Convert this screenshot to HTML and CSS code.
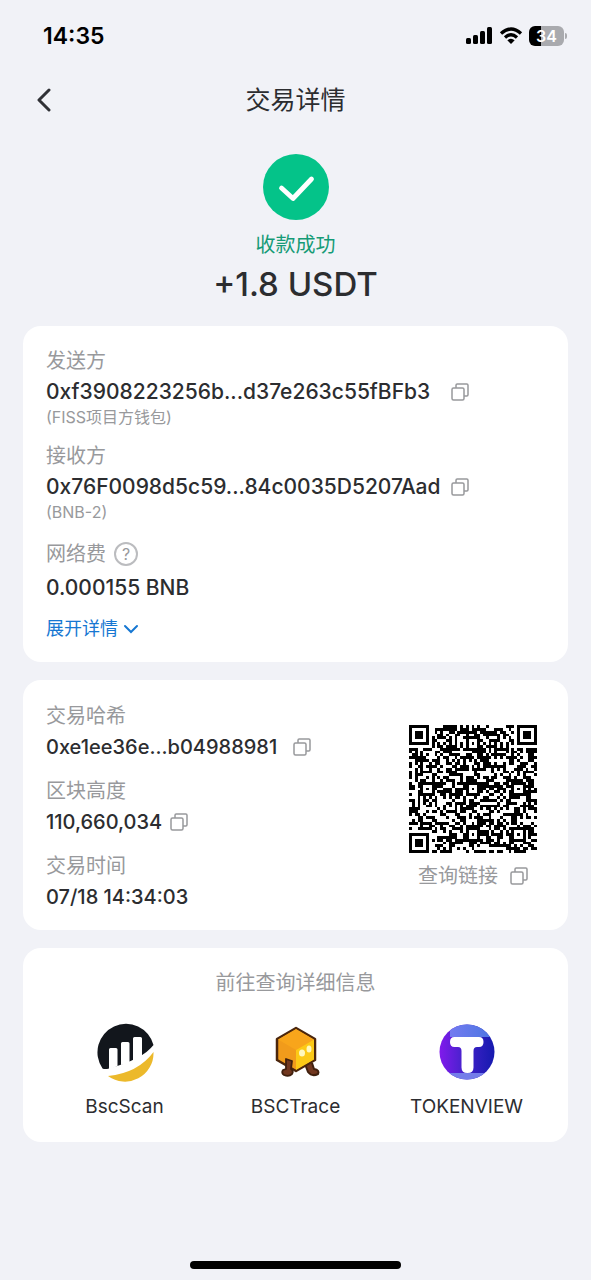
FILE: index.html
```html
<!DOCTYPE html>
<html lang="zh-CN">
<head>
  <meta charset="UTF-8" />
  <meta name="viewport" content="width=device-width, initial-scale=1.0"/>
  <title>交易详情</title>
  <link rel="stylesheet" href="styles.css">
</head>
<body>
  <svg width="0" height="0" class="sprite" aria-hidden="true">
    <symbol id="copy" viewBox="0 0 18 18">
      <rect x="1" y="5" width="12" height="12" rx="1.5"/>
      <path d="M5 5V2.200Q5 1 6.200 1H15.800Q17 1 17 2.200V11.800Q17 13 15.800 13H13"/>
    </symbol>
  </svg>

  <div class="status-bar">
    <span class="time">14:35</span>
    <div class="status-icons">
      <svg width="28" height="18" viewBox="0 0 28 18">
        <rect x="0" y="11" width="5" height="6" rx="1.500"/>
        <rect x="7" y="8" width="5" height="9" rx="1.500"/>
        <rect x="14" y="4" width="5" height="13" rx="1.500"/>
        <rect x="21" y="0" width="5" height="17" rx="1.500"/>
      </svg>
      <svg width="24" height="18" viewBox="0 0 24 18">
        <path d="M2 6.500Q12-2.500 22 6.500M6 10.500Q12 5 18 10.500" fill="none" stroke="#000" stroke-width="3.300"/>
        <path d="M8.300 13.300Q12 10.300 15.700 13.300L12 17Z"/>
      </svg>
      <div class="battery"><span>34</span></div>
    </div>
  </div>

  <header>
    <button class="back" aria-label="返回">
      <svg width="14" height="24" viewBox="0 0 14 24"><path d="M12 2L2 12L12 22"/></svg>
    </button>
    <h1>交易详情</h1>
  </header>

  <section class="result">
    <svg width="66" height="66" viewBox="0 0 66 66">
      <circle cx="33" cy="33" r="33" fill="#04c389"/>
      <path d="M18.500 34L30 44.500L48.500 25" fill="none" stroke="#fff" stroke-width="4.800" stroke-linecap="round" stroke-linejoin="round"/>
    </svg>
    <p class="state">收款成功</p>
    <p class="amount">+1.8 USDT</p>
  </section>

  <main>
    <section class="card transfer">
      <div class="party">
        <h2>发送方</h2>
        <div class="value"><span class="address">0xf3908223256b...d37e263c55fBFb3</span><button class="copy" aria-label="复制发送方"><svg><use href="#copy"/></svg></button></div>
        <p class="note">(FISS项目方钱包)</p>
      </div>
      <div class="party">
        <h2>接收方</h2>
        <div class="value"><span class="address">0x76F0098d5c59...84c0035D5207Aad</span><button class="copy" aria-label="复制接收方"><svg><use href="#copy"/></svg></button></div>
        <p class="note">(BNB-2)</p>
      </div>
      <div class="fee">
        <h2>网络费
          <button class="help" aria-label="网络费说明">?</button>
        </h2>
        <div class="value">0.000155 BNB</div>
      </div>
      <button class="expand">展开详情
        <svg width="16" height="10" viewBox="0 0 16 10"><path d="M2 2L8 8L14 2"/></svg>
      </button>
    </section>

    <section class="card chain">
      <div class="facts">
        <div>
          <h2>交易哈希</h2>
          <div class="value wide">0xe1ee36e...b04988981<button class="copy" aria-label="复制哈希"><svg><use href="#copy"/></svg></button></div>
        </div>
        <div>
          <h2>区块高度</h2>
          <div class="value">110,660,034<button class="copy" aria-label="复制高度"><svg><use href="#copy"/></svg></button></div>
        </div>
        <div>
          <h2>交易时间</h2>
          <div class="value">07/18 14:34:03</div>
        </div>
      </div>
      <div class="qr">
        <svg id="qr" viewBox="0 0 45 45" shape-rendering="crispEdges"></svg>
        <button class="qr-link">查询链接 <svg><use href="#copy"/></svg></button>
      </div>
    </section>

    <section class="card explorers">
      <h2>前往查询详细信息</h2>
      <nav>
        <a href="#bscscan">
          <svg width="60" height="60" viewBox="0 0 60 60">
            <path d="M7.500 46.500A28.500 28.500 0 1 1 58.500 23Q48 37 14 46.500Q10 47.500 7.500 46.500Z" fill="#12161c"/>
            <path d="M14 48V27.500Q14 26 15.500 26H21Q22.500 26 22.500 27.500V44ZM26 43V21.500Q26 20 27.500 20H33Q34.500 20 34.500 21.500V41ZM38 40V16.500Q38 15 39.500 15H45.500Q47 15 47 16.500V37Z" fill="#fff"/>
            <path d="M13 54Q43 51 58.500 30A28.500 28.500 0 0 1 13 54Z" fill="#ecb92b"/>
          </svg>
          BscScan
        </a>
        <a href="#bsctrace">
          <svg width="60" height="60" viewBox="0 0 60 60">
            <path d="M39 42L42 50Q46 55 52 52Q54 48 48 47L46 41" fill="#71371f" stroke="#40200e" stroke-width="2" stroke-linejoin="round"/>
            <path d="M30 6L49 17V38L30 49L11 38V17Z" fill="#f19b1b" stroke="#4b260d" stroke-width="2.500" stroke-linejoin="round"/>
            <path d="M30 7L48 17.500L30 28L12 17.500Z" fill="#f8a51b"/>
            <path d="M30 28L48 17.500V37.500L30 48Z" fill="#fcc916"/>
            <path d="M20 37L26 39L25 47Q28 49 26 52Q23 55 18 53Q15 51 17 48L20 47Z" fill="#71371f" stroke="#40200e" stroke-width="1.800" stroke-linejoin="round"/>
            <ellipse cx="36" cy="31" rx="3" ry="3.500" fill="#fff8bd"/>
            <ellipse cx="43" cy="27" rx="2.500" ry="3.500" fill="#fff8bd"/>
          </svg>
          BSCTrace
        </a>
        <a href="#tokenview">
          <svg width="60" height="60" viewBox="0 0 60 60">
            <defs>
              <linearGradient id="tv"><stop offset="0" stop-color="#8719ef"/><stop offset="0.450" stop-color="#4522cb"/><stop offset="1" stop-color="#1119ac"/></linearGradient>
              <linearGradient id="tv-top"><stop offset="0" stop-color="#737bf0"/><stop offset="1" stop-color="#4775e0"/></linearGradient>
              <clipPath id="round"><circle cx="30" cy="30" r="27.500"/></clipPath>
            </defs>
            <g clip-path="url(#round)">
              <rect width="60" height="60" fill="url(#tv)"/>
              <path d="M13 0H60V15H13Z" fill="url(#tv-top)"/>
              <path d="M12 51H48V60H12Z" fill="#747de9"/>
            </g>
            <path d="M17.500 15H42Q46.500 15 46.500 20T42 25H40Q36.500 25 36.500 29V45.500Q36.500 51 30.500 51T24.500 45.500V29Q24.500 25 21 25H17.500Q13 25 13 20T17.500 15Z" fill="#fff"/>
          </svg>
          TOKENVIEW
        </a>
      </nav>
    </section>
  </main>

  <div class="home-indicator"></div>

  <script>
    const SIZE = 45;
    const marks = [6, 22, 38];

    // rings around a centre: finder (r = 4) or alignment (r = 2)
    function ring(x, y, cx, cy, r) {
      const d = Math.max(Math.abs(x - cx), Math.abs(y - cy));
      if (d > r) return null;
      return r === 4 ? d !== 2 && d !== 4 : d !== 1;
    }

    function fixed(x, y) {
      for (const [cx, cy] of [[3, 3], [41, 3], [3, 41]]) {
        const v = ring(x, y, cx, cy, 4);
        if (v !== null) return v;
      }
      for (const cx of marks) for (const cy of marks) {
        if ((cx === 6 && cy !== 22) || (cy === 6 && cx !== 22)) continue;
        const v = ring(x, y, cx, cy, 2);
        if (v !== null) return v;
      }
      if (x === 6 || y === 6) return (x + y) % 2 === 0;
      return null;
    }

    function drawQr() {
      let seed = 110660034, d = "";
      for (let y = 0; y < SIZE; y++) {
        for (let x = 0; x < SIZE; x++) {
          seed = (Math.imul(seed, 1664525) + 1013904223) >>> 0;
          let on = fixed(x, y);
          if (on === null) on = (seed >>> 16) % 100 < 55;
          if (on) d += `M${x} ${y}h1v1h-1z`;
        }
      }
      document.getElementById("qr").innerHTML = `<path d="${d}"/>`;
    }

    drawQr();
  </script>
</body>
</html>
```
FILE: styles.css
```css
:root {
  --bg-color: #f1f2f7;
  --text-color: #2c2d30;
  --muted: #98999c;
  --link: #1677d2;
  --card-bg: #fff;
}
* {
  box-sizing: border-box;
}
body {
  display: flex;
  flex-direction: column;
  min-height: 100vh;
  margin: 0;
  font-family: Inter, "Noto Sans CJK SC", sans-serif;
  font-size: 20px;
  background-color: var(--bg-color);
  color: var(--text-color);
}
h1, h2, p {
  margin: 0;
  font-weight: 400;
}
button {
  padding: 0;
  border: none;
  background: none;
  font: inherit;
  color: inherit;
  cursor: pointer;
}
svg {
  flex: none;
}
.sprite {
  position: absolute;
}
.status-bar {
  display: flex;
  align-items: center;
  justify-content: space-between;
  height: 72px;
  padding: 0 27px 0 43px;
  color: #000;
}
.time {
  font-size: 23px;
  font-weight: 600;
}
.status-icons {
  display: flex;
  align-items: center;
  gap: 5px;
}
.battery {
  position: relative;
  width: 35px;
  height: 20px;
  margin-left: 1px;
  border-radius: 6px;
  background: linear-gradient(90deg, #000 34%, #a9aaae 34%);
  color: #fff;
  font-size: 16px;
  font-weight: 600;
  line-height: 20px;
  text-align: center;
}
.battery::after {
  content: "";
  position: absolute;
  right: -3px;
  top: 7px;
  width: 2px;
  height: 6px;
  border-radius: 0 2px 2px 0;
  background: #a9aaae;
}
header {
  display: grid;
  grid-template-columns: 40px 1fr 40px;
  align-items: center;
  height: 56px;
  padding: 0 25px;
}
header h1 {
  font-size: 25px;
  line-height: 36px;
  text-align: center;
}
.back {
  height: 40px;
}
.back svg {
  display: block;
  margin-left: 12px;
  fill: none;
  stroke: #303136;
  stroke-width: 3;
  stroke-linecap: round;
  stroke-linejoin: round;
}
.result {
  display: flex;
  flex-direction: column;
  align-items: center;
  padding: 26px 0 18px;
}
.state {
  margin-top: 10px;
  line-height: 30px;
  color: #159b76;
}
.amount {
  font-size: 33px;
  font-weight: 500;
  line-height: 48px;
}
main {
  display: grid;
  gap: 18px;
  padding: 0 23px;
}
.card {
  padding: 20px 23px;
  border-radius: 18px;
  background-color: var(--card-bg);
}
.card h2 {
  font-size: 20px;
  line-height: 30px;
  color: var(--muted);
}
.value {
  display: flex;
  align-items: center;
  gap: 8px;
  font-weight: 500;
  line-height: 32px;
}
.value.wide {
  gap: 16px;
}
.transfer {
  padding-bottom: 18px;
}
.transfer .value {
  font-size: 21px;
}
.address {
  width: 397px;
}
.copy, .qr-link {
  display: flex;
  align-items: center;
}
.copy svg, .qr-link svg {
  width: 18px;
  height: 18px;
  fill: none;
  stroke: #98999c;
  stroke-width: 1.5;
}
.party {
  margin-bottom: 15px;
}
.note {
  font-size: 16px;
  line-height: 18px;
  color: var(--muted);
}
.card .fee h2 {
  display: flex;
  align-items: center;
  gap: 8px;
  line-height: 36px;
}
.help {
  width: 24px;
  height: 24px;
  border: 2px solid #bbbcbf;
  border-radius: 50%;
  font-size: 16px;
  line-height: 20px;
}
.expand {
  display: flex;
  align-items: center;
  gap: 5px;
  margin-top: 10px;
  font-size: 18px;
  line-height: 30px;
  color: var(--link);
}
.expand svg {
  fill: none;
  stroke: var(--link);
  stroke-width: 2;
  stroke-linecap: round;
}
.chain {
  display: flex;
  justify-content: space-between;
  padding: 21px 31px 17px 23px;
}
.facts {
  display: grid;
  gap: 13px;
}
.qr {
  display: flex;
  flex-direction: column;
  align-items: center;
  padding-top: 24px;
}
#qr {
  width: 128px;
  height: 128px;
}
.qr-link {
  gap: 12px;
  margin-top: 8px;
  line-height: 30px;
  color: var(--muted);
}
.explorers {
  padding: 20px 16px;
}
.explorers h2 {
  text-align: center;
}
.explorers nav {
  display: grid;
  grid-template-columns: repeat(3, 1fr);
  margin-top: 24px;
}
.explorers a {
  display: flex;
  flex-direction: column;
  align-items: center;
  gap: 10px;
  font-size: 19px;
  line-height: 30px;
  color: var(--text-color);
  text-decoration: none;
}
.home-indicator {
  width: 211px;
  height: 8px;
  margin: auto auto 11px;
  border-radius: 4px;
  background: #000;
}
```
